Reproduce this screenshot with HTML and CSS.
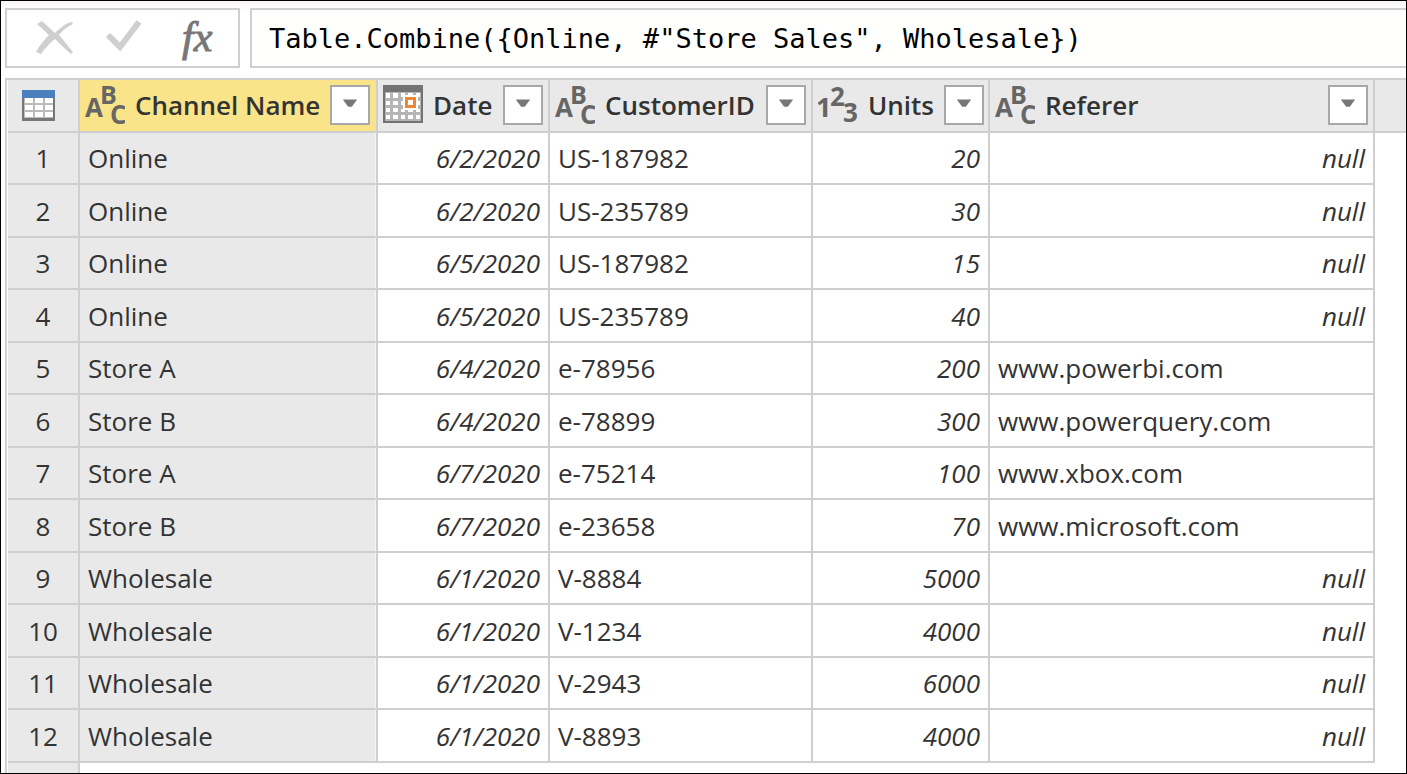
FILE: index.html
```html
<!DOCTYPE html>
<html lang="en">
<head>
<meta charset="utf-8">
<title>Table.Combine</title>
<link rel="stylesheet" href="styles.css">
</head>
<body>
<svg class="defs" aria-hidden="true">
  <symbol id="icon-abc" viewBox="0 0 40 40">
    <g class="glyphs">
      <text x="0" y="32" font-size="26">A</text>
      <text x="15" y="19" font-size="25">B</text>
      <text x="25" y="39" font-size="26">C</text>
    </g>
  </symbol>
  <symbol id="icon-123" viewBox="0 0 40 40">
    <g class="glyphs">
      <text x="-2" y="32" font-size="27">1</text>
      <text x="12" y="21" font-size="26">2</text>
      <text x="25" y="37" font-size="26">3</text>
    </g>
  </symbol>
  <symbol id="icon-date" viewBox="0 0 40 40">
    <path fill="#737373" d="M0 0h40v38H0z"/>
    <path fill="#b5b5b5" d="M2 7h36v29H2z"/>
    <path fill="#fff" d="M3 8h4v5H3zM10 8h5v5h-5zM18 8h4v4h-4zM25 8h5v3h-5zM33 8h4v4h-4zM3 16h4v4H3zM10 16h5v4h-5zM3 23h4v4H3zM10 23h5v4h-5zM3 30h4v4H3zM10 30h5v4h-5zM18 30h4v4h-4zM25 30h5v4h-5zM33 30h4v4h-4zM18 24h4v3h-4zM25 24h5v3h-5zM33 24h4v3h-4zM18 16h3v4h-3zM35 16h2v4h-2z"/>
    <path fill="#fff" d="M20 10h15v15H20z"/>
    <path fill="none" stroke="#ed8733" stroke-width="3" d="M23.500 13.500h8v8h-8z"/>
  </symbol>
  <symbol id="icon-arrow" viewBox="0 0 40 40">
    <path fill="#777" d="M12 14h16l-6 8h-4z"/>
  </symbol>
</svg>
<main class="app">
  <header class="bar">
    <div class="tools">
      <button class="tool" type="button" aria-label="Cancel"><svg width="40" height="40" viewBox="0 0 40 40"><path fill="#cfcfcf" d="M2 6l5-3 13 12C26 9 31 5 37 4l1 2c-6 3-10 6-14 11 5 6 9 11 14 17l-2 2C30 31 25 26 20 21 14 26 10 30 6 36l-5-2C4 28 9 22 14 17z"/></svg></button>
      <button class="tool" type="button" aria-label="Commit"><svg width="40" height="40" viewBox="0 0 40 40"><path fill="none" stroke="#cfcfcf" stroke-width="6" d="M3 17l12 12L34 4"/></svg></button>
      <button class="tool" type="button" aria-label="Add step"><svg width="40" height="42" viewBox="0 0 40 42"><text class="fx" x="7" y="33" font-size="42">fx</text></svg></button>
    </div>
    <input class="formula" type="text" aria-label="Formula" spellcheck="false" value="Table.Combine({Online, #&quot;Store Sales&quot;, Wholesale})">
  </header>
  <div class="grid">
    <table>
      <colgroup><col class="c-num"><col class="c-channel"><col class="c-date"><col class="c-customer"><col class="c-units"><col class="c-referer"><col></colgroup>
      <thead>
        <tr>
          <th class="corner"><button class="corner-button" type="button" aria-label="Table options"><svg width="33" height="31" viewBox="0 0 33 31"><path fill="#777" d="M0 0h33v31H0z"/><path fill="#4a81bd" d="M0 0h33v8H0z"/><path fill="#bbb" d="M2 8h29v20H2z"/><path fill="#fff" d="M3 8h8v5H3zM13 8h8v5h-8zM23 8h8v5h-8zM3 15h8v5H3zM13 15h8v5h-8zM23 15h8v5h-8zM3 22h8v5H3zM13 22h8v5h-8zM23 22h8v5h-8z"/></svg></button></th>
          <th class="selected"><div class="head"><svg class="type"><use href="#icon-abc"/></svg><span>Channel Name</span><button class="filter" type="button" aria-label="Filter Channel Name"><svg><use href="#icon-arrow"/></svg></button></div></th>
          <th><div class="head"><svg class="type"><use href="#icon-date"/></svg><span>Date</span><button class="filter" type="button" aria-label="Filter Date"><svg><use href="#icon-arrow"/></svg></button></div></th>
          <th><div class="head"><svg class="type"><use href="#icon-abc"/></svg><span>CustomerID</span><button class="filter" type="button" aria-label="Filter CustomerID"><svg><use href="#icon-arrow"/></svg></button></div></th>
          <th><div class="head"><svg class="type"><use href="#icon-123"/></svg><span>Units</span><button class="filter" type="button" aria-label="Filter Units"><svg><use href="#icon-arrow"/></svg></button></div></th>
          <th><div class="head"><svg class="type"><use href="#icon-abc"/></svg><span>Referer</span><button class="filter" type="button" aria-label="Filter Referer"><svg><use href="#icon-arrow"/></svg></button></div></th>
          <th class="rest"></th>
        </tr>
      </thead>
      <tbody>
        <tr><th>1</th><td class="picked">Online</td><td class="value">6/2/2020</td><td>US-187982</td><td class="value">20</td><td class="value">null</td></tr>
        <tr><th>2</th><td class="picked">Online</td><td class="value">6/2/2020</td><td>US-235789</td><td class="value">30</td><td class="value">null</td></tr>
        <tr><th>3</th><td class="picked">Online</td><td class="value">6/5/2020</td><td>US-187982</td><td class="value">15</td><td class="value">null</td></tr>
        <tr><th>4</th><td class="picked">Online</td><td class="value">6/5/2020</td><td>US-235789</td><td class="value">40</td><td class="value">null</td></tr>
        <tr><th>5</th><td class="picked">Store A</td><td class="value">6/4/2020</td><td>e-78956</td><td class="value">200</td><td>www.powerbi.com</td></tr>
        <tr><th>6</th><td class="picked">Store B</td><td class="value">6/4/2020</td><td>e-78899</td><td class="value">300</td><td>www.powerquery.com</td></tr>
        <tr><th>7</th><td class="picked">Store A</td><td class="value">6/7/2020</td><td>e-75214</td><td class="value">100</td><td>www.xbox.com</td></tr>
        <tr><th>8</th><td class="picked">Store B</td><td class="value">6/7/2020</td><td>e-23658</td><td class="value">70</td><td>www.microsoft.com</td></tr>
        <tr><th>9</th><td class="picked">Wholesale</td><td class="value">6/1/2020</td><td>V-8884</td><td class="value">5000</td><td class="value">null</td></tr>
        <tr><th>10</th><td class="picked">Wholesale</td><td class="value">6/1/2020</td><td>V-1234</td><td class="value">4000</td><td class="value">null</td></tr>
        <tr><th>11</th><td class="picked">Wholesale</td><td class="value">6/1/2020</td><td>V-2943</td><td class="value">6000</td><td class="value">null</td></tr>
        <tr><th>12</th><td class="picked">Wholesale</td><td class="value">6/1/2020</td><td>V-8893</td><td class="value">4000</td><td class="value">null</td></tr>
      </tbody>
    </table>
    <div class="gutter"></div>
  </div>
</main>
</body>
</html>
```
FILE: styles.css
```css
* { box-sizing: border-box; }

body {
  margin: 0;
  background: #fff;
  color: #333;
  font-family: "Open Sans", "Noto Sans", sans-serif;
  font-size: 26px;
  line-height: 34px;
}

button { padding: 0; border: 0; background: none; }

svg { display: block; }

.defs { display: none; }

.app {
  display: flex;
  flex-direction: column;
  min-height: 100vh;
  border: 1px solid #000;
}

.bar {
  display: flex;
  gap: 10px;
  padding: 7px 0 10px 4px;
  background: linear-gradient(#f8f4f8, #fff 10px);
}

.tools {
  display: flex;
  gap: 30px;
  align-items: center;
  width: 235px;
  height: 60px;
  padding-left: 28px;
  border: 2px solid #cfcfcf;
  background: #fff;
}

.tool { width: 40px; height: 40px; }

.tool svg { overflow: visible; }

.fx {
  fill: #777;
  stroke: #777;
  stroke-width: 1px;
  font-family: "Liberation Serif", serif;
  font-style: italic;
}

.formula {
  flex: 1;
  min-width: 0;
  height: 60px;
  padding: 0 0 0 17px;
  border: 2px solid #cfcfcf;
  border-right: 0;
  border-radius: 0;
  outline: 0;
  background: #fffffd;
  color: #000;
  font-family: "DejaVu Sans Mono", monospace;
  font-size: 27px;
}

.grid {
  display: flex;
  flex: 1;
  flex-direction: column;
  margin-left: 4px;
  border-top: 2px solid #cfcfcf;
  border-left: 2px solid #cfcfcf;
  padding-left: 1px;
}

table {
  width: 100%;
  border-spacing: 0;
  table-layout: fixed;
}

.c-num { width: 72px; }
.c-channel { width: 298px; }
.c-date { width: 172px; }
.c-customer { width: 263px; }
.c-units { width: 177px; }
.c-referer { width: 385px; }

th, td {
  padding: 0 8px;
  border-right: 2px solid #cfcfcf;
  border-bottom: 2px solid #cfcfcf;
  text-align: left;
  white-space: nowrap;
}

th { background: #e9e9e9; font-weight: 400; }

tbody tr { height: 52px; }
tbody tr:nth-child(even) { height: 53px; }
tbody th { padding: 0; text-align: center; }

thead th { height: 53px; padding: 0 5px; font-weight: 600; }

.corner-button { display: block; margin-left: 9px; }

thead .rest { border-right: 0; }

thead .selected { padding-right: 6px; background: #f9e489; }

.picked { background: #e9e9e9; box-shadow: inset -1px 0 #f6f6f6; }

.value { text-align: right; font-style: italic; }

.head { display: flex; align-items: center; gap: 10px; height: 40px; margin-bottom: 2px; }

.type { flex: none; width: 40px; height: 40px; }

.glyphs {
  fill: #666;
  font-family: "Open Sans", sans-serif;
  font-weight: 700;
}

.filter {
  flex: none;
  width: 40px;
  height: 40px;
  margin-left: auto;
  border: 2px solid #a8a8a8;
  background: #fff;
}

.filter svg { width: 36px; height: 36px; }

.gutter {
  flex: 1;
  width: 72px;
  border-right: 2px solid #cfcfcf;
  background: #e9e9e9;
}
```
